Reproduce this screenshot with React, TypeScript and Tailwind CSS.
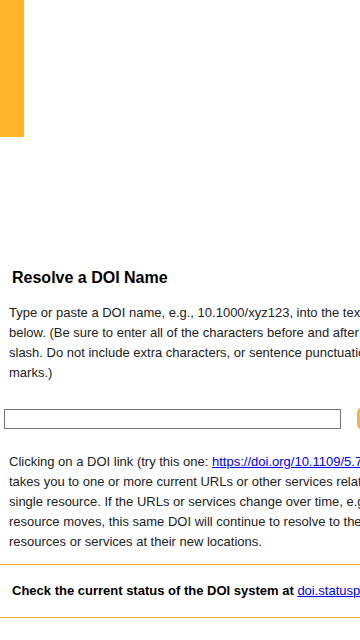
import React from "react"

const orange = "bg-[#fdb32a]"

const App = () => {
  return (
    <div className="w-[360px] overflow-hidden bg-white" style={{ fontFamily: '"Liberation Sans", Arial, sans-serif' }}>
      <div className="w-[420px] text-[13px] leading-[20px] text-[#222]">
        <div className={`w-[24px] h-[137px] ${orange}`} />

        <h1 className="mt-[131px] pl-[12px] text-[16px] leading-[20px] font-bold text-black">Resolve a DOI Name</h1>

        <p className="mt-[15px] pl-[9px] pr-[6px]">
          Type or paste a DOI name, e.g., 10.1000/xyz123, into the text box below. (Be sure to enter all of the
          characters before and after the slash. Do not include extra characters, or sentence punctuation marks.)
        </p>

        <form className="mt-[24px] flex items-center pl-[4px]" onSubmit={(e) => e.preventDefault()}>
          <input type="text" className="shrink-0 w-[337px] h-[20px] border border-[#767676] bg-white" />
          <button
            type="submit"
            className={`shrink-0 ml-[16px] h-[23px] px-3 rounded-md ${orange} text-white text-[13px] font-bold`}
          >
            Submit
          </button>
        </form>

        <p className="mt-[22px] pl-[9px] pr-[6px]">
          Clicking on a DOI link (try this one:{" "}
          <a href="#" className="text-[#0000ee] underline">
            https://doi.org/10.1109/5.771073
          </a>
          ) takes you to one or more current URLs or other services related to a single resource. If the URLs or
          services change over time, e.g., the resource moves, this same DOI will continue to resolve to the correct
          resources or services at their new locations.
        </p>

        <div className={`mt-[12px] h-[1px] ${orange}`} />
        <p className="py-[16px] pl-[12px] font-bold text-black">
          Check the current status of the DOI system at{" "}
          <a href="#" className="text-[#0000ee] underline font-normal">
            doi.statuspage.io
          </a>
        </p>
        <div className={`h-[1px] ${orange}`} />
        <div className="h-[40px]" />
      </div>
    </div>
  )
}

export default App
